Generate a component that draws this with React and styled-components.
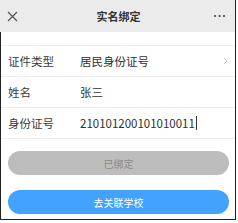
import React from "react";
import styled, { createGlobalStyle } from "styled-components";

const GlobalStyle = createGlobalStyle`
  html, body {
    margin: 0;
    padding: 0;
    background: #fff;
  }
  body {
    font-family: "Noto Sans CJK SC", "Noto Sans", sans-serif;
  }
`;

const Frame = styled.div`
  width: 236px;
  height: 220px;
  box-sizing: border-box;
  border-right: 1px solid #222;
  border-bottom: 1px solid #222;
  display: flex;
  flex-direction: column;
  overflow: hidden;
`;

const NavBar = styled.div`
  height: 32px;
  flex-shrink: 0;
  background: #ebebeb;
  display: grid;
  grid-template-columns: 40px 1fr 40px;
  align-items: center;
  color: #222;
`;

const NavTitle = styled.div`
  text-align: center;
  font-size: 11px;
  font-weight: 700;
  color: #333;
  padding-left: 2px;
`;

const NavIcon = styled.div`
  display: flex;
  align-items: center;
  justify-content: ${(p) => (p.$right ? "flex-end" : "flex-start")};
  padding: ${(p) => (p.$right ? "0 9px 0 0" : "0 0 0 7px")};
`;

const Body = styled.div`
  flex: 1;
  border-left: 1px solid #222;
  padding-top: 13px;
  display: flex;
  flex-direction: column;
`;

const List = styled.div`
  border-top: 1px solid #f0f0f0;
`;

const Row = styled.div`
  height: 30px;
  display: flex;
  align-items: center;
  border-bottom: 1px solid #efefef;
  padding: 0 7px 0 7px;
  font-size: 11.5px;
  color: #333;
`;

const Label = styled.div`
  width: 72px;
  flex-shrink: 0;
  color: #3a3a3a;
`;

const Value = styled.div`
  flex: 1;
  display: flex;
  align-items: center;
  color: #2f2f2f;
`;

const Cursor = styled.span`
  display: inline-block;
  width: 1px;
  height: 14px;
  background: #333;
  margin-left: 1px;
`;

const Buttons = styled.div`
  display: flex;
  flex-direction: column;
  gap: 15px;
  padding: 12px 6px 0 7px;
`;

const Pill = styled.button`
  height: 24px;
  border: none;
  border-radius: 12px;
  font-family: inherit;
  font-size: 10px;
  background: ${(p) => (p.$primary ? "#42a2fd" : "#bdbdbd")};
  color: ${(p) => (p.$primary ? "#fff" : "#8a8a8a")};
  padding: 0;
`;

export default function App() {
  return (
    <>
      <GlobalStyle />
      <Frame>
        <NavBar>
          <NavIcon>
            <svg width="11" height="11" viewBox="0 0 11 11">
              <path d="M1 1L10 10M10 1L1 10" stroke="#555" strokeWidth="1.2" fill="none" />
            </svg>
          </NavIcon>
          <NavTitle>实名绑定</NavTitle>
          <NavIcon $right>
            <svg width="13" height="4" viewBox="0 0 13 4">
              <circle cx="2" cy="2" r="1.1" fill="#444" />
              <circle cx="6.5" cy="2" r="1.1" fill="#444" />
              <circle cx="11" cy="2" r="1.1" fill="#444" />
            </svg>
          </NavIcon>
        </NavBar>
        <Body>
          <List>
            <Row>
              <Label>证件类型</Label>
              <Value>居民身份证号</Value>
              <svg width="5" height="8" viewBox="0 0 5 8">
                <path d="M1 1L4 4L1 7" stroke="#c4c4c4" strokeWidth="1" fill="none" />
              </svg>
            </Row>
            <Row>
              <Label>姓名</Label>
              <Value>张三</Value>
            </Row>
            <Row>
              <Label>身份证号</Label>
              <Value>
                210101200101010011
                <Cursor />
              </Value>
            </Row>
          </List>
          <Buttons>
            <Pill disabled>已绑定</Pill>
            <Pill $primary>去关联学校</Pill>
          </Buttons>
        </Body>
      </Frame>
    </>
  );
}
